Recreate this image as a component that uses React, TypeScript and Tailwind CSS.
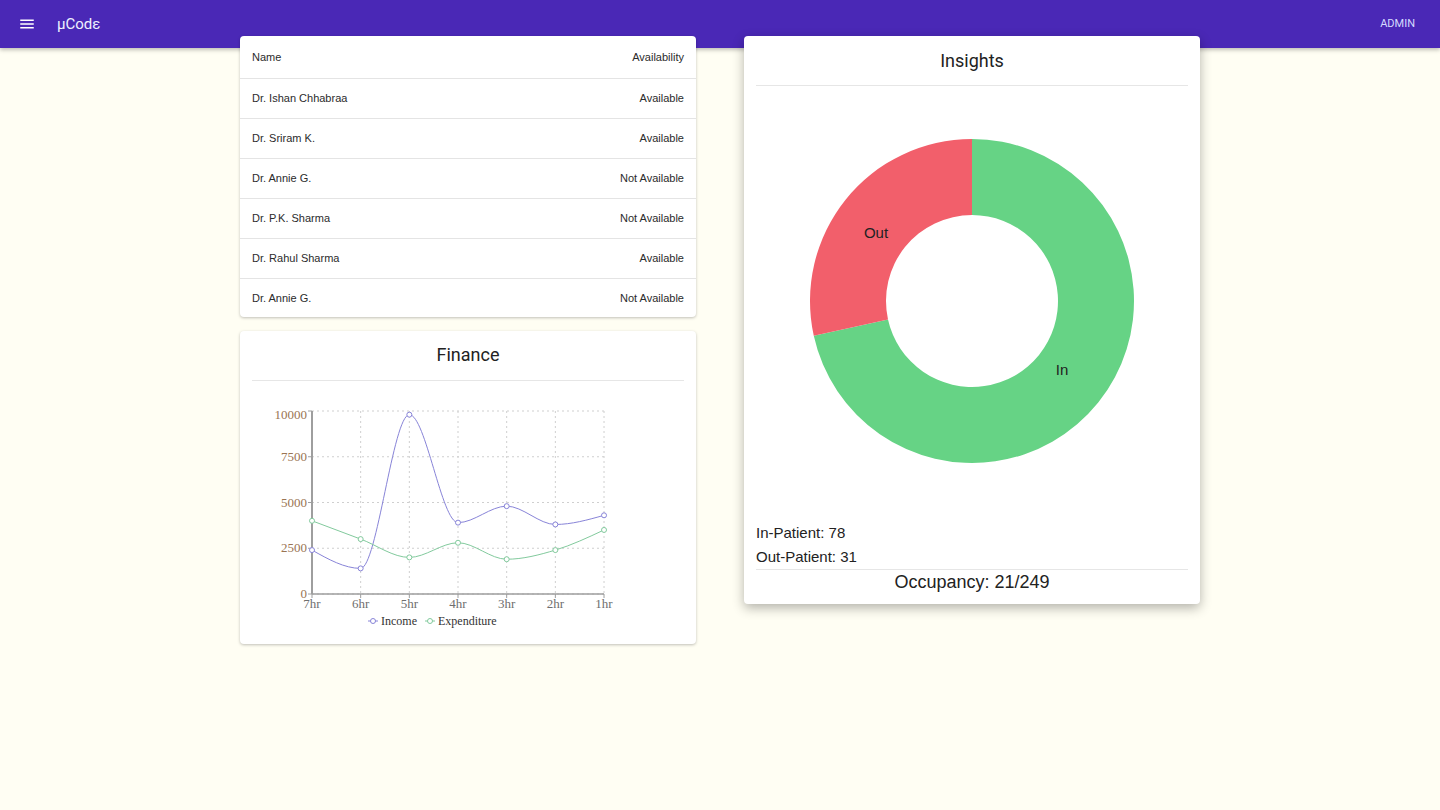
import React from "react";

const doctors = [
  { name: "Dr. Ishan Chhabraa", status: "Available" },
  { name: "Dr. Sriram K.", status: "Available" },
  { name: "Dr. Annie G.", status: "Not Available" },
  { name: "Dr. P.K. Sharma", status: "Not Available" },
  { name: "Dr. Rahul Sharma", status: "Available" },
  { name: "Dr. Annie G.", status: "Not Available" },
];

const hours = ["7hr", "6hr", "5hr", "4hr", "3hr", "2hr", "1hr"];
const income = [2400, 1400, 9800, 3900, 4800, 3800, 4300];
const expenditure = [4000, 3000, 2000, 2800, 1900, 2400, 3500];

// chart geometry (svg coords)
const X0 = 60;
const STEP = 48.67;
const YTOP = 30;
const YBOT = 213;
const px = (i: number) => X0 + i * STEP;
const py = (v: number) => YBOT - ((YBOT - YTOP) * v) / 10000;

// monotone-x cubic, same idea as d3 curveMonotoneX
function monotonePath(values: number[]) {
  const xs = values.map((_, i) => px(i));
  const ys = values.map((v) => py(v));
  const n = xs.length;
  const s: number[] = [];
  for (let i = 0; i < n - 1; i++) s.push((ys[i + 1] - ys[i]) / (xs[i + 1] - xs[i]));
  const t: number[] = new Array(n).fill(0);
  for (let i = 1; i < n - 1; i++) {
    const h0 = xs[i] - xs[i - 1];
    const h1 = xs[i + 1] - xs[i];
    const s0 = s[i - 1];
    const s1 = s[i];
    const p = (s0 * h1 + s1 * h0) / (h0 + h1);
    t[i] = (Math.sign(s0) + Math.sign(s1)) * Math.min(Math.abs(s0), Math.abs(s1), 0.5 * Math.abs(p)) || 0;
  }
  t[0] = (3 * s[0] - t[1]) / 2;
  t[n - 1] = (3 * s[n - 2] - t[n - 2]) / 2;
  let d = `M${xs[0]},${ys[0]}`;
  for (let i = 0; i < n - 1; i++) {
    const dx = (xs[i + 1] - xs[i]) / 3;
    d += ` C${xs[i] + dx},${ys[i] + dx * t[i]} ${xs[i + 1] - dx},${ys[i + 1] - dx * t[i + 1]} ${xs[i + 1]},${ys[i + 1]}`;
  }
  return d;
}

function FinanceChart() {
  const ticks = [0, 2500, 5000, 7500, 10000];
  return (
    <svg width="432" height="258" className="block" style={{ fontFamily: '"Liberation Serif", serif' }}>
      {ticks.map((t) => (
        <line key={t} x1={X0} x2={px(6)} y1={py(t)} y2={py(t)} stroke="#cfcfcf" strokeDasharray="2 3" />
      ))}
      {hours.map((h, i) => (
        <line key={h} x1={px(i)} x2={px(i)} y1={YTOP} y2={YBOT} stroke="#cfcfcf" strokeDasharray="2 3" />
      ))}
      <line x1={X0} x2={X0} y1={YTOP} y2={YBOT} stroke="#9e9e9e" strokeWidth="2" />
      <line x1={X0} x2={px(6)} y1={YBOT} y2={YBOT} stroke="#9e9e9e" strokeWidth="1.5" />
      {ticks.map((t) => (
        <g key={t}>
          <line x1={X0 - 4} x2={X0} y1={py(t)} y2={py(t)} stroke="#9e9e9e" />
          <text x={X0 - 5} y={py(t) + (t === 10000 ? 8 : 4)} textAnchor="end" fontSize="13" fill="#9a7452">
            {t}
          </text>
        </g>
      ))}
      {hours.map((h, i) => (
        <g key={h}>
          <line x1={px(i)} x2={px(i)} y1={YBOT} y2={YBOT + 4} stroke="#9e9e9e" />
          <text x={px(i)} y={YBOT + 14} textAnchor="middle" fontSize="13" fill="#6e6e6e">
            {h}
          </text>
        </g>
      ))}
      <path d={monotonePath(income)} fill="none" stroke="#8884d8" strokeWidth="1" />
      <path d={monotonePath(expenditure)} fill="none" stroke="#82ca9d" strokeWidth="1" />
      {income.map((v, i) => (
        <circle key={"i" + i} cx={px(i)} cy={py(v)} r="2.5" fill="#fff" stroke="#8884d8" />
      ))}
      {expenditure.map((v, i) => (
        <circle key={"e" + i} cx={px(i)} cy={py(v)} r="2.5" fill="#fff" stroke="#82ca9d" />
      ))}
      <g>
        <line x1="116" x2="126" y1="240" y2="240" stroke="#8884d8" />
        <circle cx="121" cy="240" r="2.5" fill="#fff" stroke="#8884d8" />
        <text x="129" y="244" fontSize="12" fill="#333">Income</text>
        <line x1="173" x2="183" y1="240" y2="240" stroke="#82ca9d" />
        <circle cx="178" cy="240" r="2.5" fill="#fff" stroke="#82ca9d" />
        <text x="186" y="244" fontSize="12" fill="#333">Expenditure</text>
      </g>
    </svg>
  );
}

function arcPoint(cx: number, cy: number, r: number, deg: number) {
  const a = (deg * Math.PI) / 180;
  return [cx + r * Math.sin(a), cy - r * Math.cos(a)];
}

function slice(cx: number, cy: number, R: number, r: number, from: number, to: number) {
  const large = to - from > 180 ? 1 : 0;
  const [ox1, oy1] = arcPoint(cx, cy, R, from);
  const [ox2, oy2] = arcPoint(cx, cy, R, to);
  const [ix1, iy1] = arcPoint(cx, cy, r, to);
  const [ix2, iy2] = arcPoint(cx, cy, r, from);
  return `M${ox1},${oy1} A${R},${R} 0 ${large} 1 ${ox2},${oy2} L${ix1},${iy1} A${r},${r} 0 ${large} 0 ${ix2},${iy2} Z`;
}

function Donut() {
  const inP = 78;
  const outP = 31;
  const outDeg = (outP / (inP + outP)) * 360;
  const cx = 216;
  const cy = 215;
  return (
    <svg width="432" height="435" className="block" style={{ fontFamily: '"Liberation Sans", Arial, sans-serif' }}>
      <path d={slice(cx, cy, 162, 86, 0, 360 - outDeg)} fill="#66d385" />
      <path d={slice(cx, cy, 162, 86, 360 - outDeg, 360)} fill="#f25f6b" />
      <text x="120" y="152" textAnchor="middle" fontSize="15" fill="#222">Out</text>
      <text x="306" y="289" textAnchor="middle" fontSize="15" fill="#222">In</text>
    </svg>
  );
}

export default function App() {
  return (
    <div className="min-h-[810px] bg-[#fffef3]" style={{ fontFamily: '"Liberation Sans", Arial, sans-serif' }}>
      <header className="h-12 bg-[#4a28b6] flex items-center px-[18px] shadow-[0_2px_4px_rgba(0,0,0,0.25)]">
        <svg width="18" height="18" viewBox="0 0 24 24" fill="#ffffff">
          <path d="M3 18h18v-2H3v2zm0-5h18v-2H3v2zm0-7v2h18V6H3z" />
        </svg>
        <span className="ml-[21px] text-[15px] text-[#eef0ff]" style={{ fontFamily: "Roboto, sans-serif" }}>
          μCodε
        </span>
        <span className="ml-auto mr-[7px] text-[11px] text-[#d4dbff]" style={{ fontFamily: "Roboto, sans-serif" }}>
          ADMIN
        </span>
      </header>

      <div className="relative z-10 -mt-3 mx-auto w-[960px] flex gap-12 items-start">
        <div className="w-[456px] flex flex-col gap-[14px]">
          <div className="bg-white rounded shadow-[0_1px_3px_rgba(0,0,0,0.25)] text-[11px] text-[#2b2b2b]">
            <div className="h-[43px] flex items-center justify-between px-3 border-b border-[#e4e4e4]">
              <span>Name</span>
              <span>Availability</span>
            </div>
            {doctors.map((d, i) =>
              i < doctors.length - 1 ? (
                <div key={i} className="h-[40px] flex items-center justify-between px-3 border-b border-[#e4e4e4]">
                  <span>{d.name}</span>
                  <span>{d.status}</span>
                </div>
              ) : (
                <div key={i} className="h-[38px] flex items-center justify-between px-3">
                  <span>{d.name}</span>
                  <span>{d.status}</span>
                </div>
              )
            )}
          </div>

          <div className="bg-white rounded shadow-[0_1px_3px_rgba(0,0,0,0.25)] px-3 pt-3 pb-[5px]">
            <div className="h-[24px] text-center text-[18px] leading-[24px] text-[#222]" style={{ fontFamily: "Roboto, sans-serif" }}>
              Finance
            </div>
            <div className="mt-[13px] border-b border-[#e6e6e6]" />
            <FinanceChart />
          </div>
        </div>

        <div className="w-[456px] bg-white rounded shadow-[0_4px_12px_rgba(0,0,0,0.3)] px-3 pt-[13px] pb-[10px]">
          <div className="h-[24px] text-center text-[18px] leading-[24px] text-[#222]" style={{ fontFamily: "Roboto, sans-serif" }}>
            Insights
          </div>
          <div className="mt-[12px] border-b border-[#e6e6e6]" />
          <Donut />
          <div className="text-[15px] leading-[24px] text-[#222]">In-Patient: 78</div>
          <div className="text-[15px] leading-[24px] text-[#222] border-b border-[#e6e6e6]">Out-Patient: 31</div>
          <div className="text-center text-[18px] leading-[24px] text-[#222]">Occupancy: 21/249</div>
        </div>
      </div>
    </div>
  );
}
